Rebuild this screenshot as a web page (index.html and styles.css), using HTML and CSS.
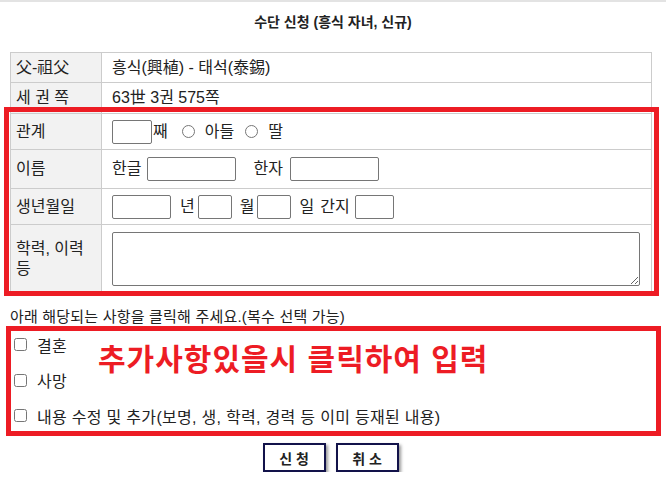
FILE: index.html
```html
<!DOCTYPE html>
<html lang="ko">
  <head>
    <meta charset="UTF-8" />
    <meta name="viewport" content="width=device-width, initial-scale=1.0" />
    <title>수단 신청</title>
    <link rel="stylesheet" href="styles.css">
  </head>
  <body>
    <div class="page">
      <h1 class="title">수단 신청 (흥식 자녀, 신규)</h1>

      <div class="form-wrap">
        <table class="info">
          <tr class="r30">
            <th>父-祖父</th>
            <td>흥식(興植) - 태석(泰錫)</td>
          </tr>
          <tr class="r31">
            <th>세 권 쪽</th>
            <td>63世 3권 575쪽</td>
          </tr>
          <tr class="r36">
            <th>관계</th>
            <td>
              <div class="field">
                <input type="text" class="box w40" />
                <span class="gap1">째</span>
                <input type="radio" name="rel" class="radio gap14" />
                <span class="gap10">아들</span>
                <input type="radio" name="rel" class="radio gap11" />
                <span class="gap10">딸</span>
              </div>
            </td>
          </tr>
          <tr class="r39">
            <th>이름</th>
            <td>
              <div class="field">
                <span>한글</span>
                <input type="text" class="box w89 gap6" />
                <span class="gap17">한자</span>
                <input type="text" class="box w89 gap7" />
              </div>
            </td>
          </tr>
          <tr class="r36">
            <th>생년월일</th>
            <td>
              <div class="field">
                <input type="text" class="box w59" />
                <span class="gap9">년</span>
                <input type="text" class="box w34 gap3" />
                <span class="gap8">월</span>
                <input type="text" class="box w34 gap3" />
                <span class="gap8">일</span>
                <span class="gap6">간지</span>
                <input type="text" class="box w39 gap5" />
              </div>
            </td>
          </tr>
          <tr class="r68">
            <th>학력, 이력 등</th>
            <td><textarea class="memo"></textarea></td>
          </tr>
        </table>
        <!-- red marker drawn over the editable rows -->
        <div class="mark"></div>
      </div>

      <p class="note">아래 해당되는 사항을 클릭해 주세요.(복수 선택 가능)</p>

      <div class="extra">
        <label class="check"><input type="checkbox" />결혼</label>
        <label class="check"><input type="checkbox" />사망</label>
        <label class="check"><input type="checkbox" />내용 수정 및 추가(보명, 생, 학력, 경력 등 이미 등재된 내용)</label>
        <span class="extra-hint">추가사항있을시 클릭하여 입력</span>
      </div>

      <div class="actions">
        <button class="btn">신 청</button>
        <button class="btn">취 소</button>
      </div>
    </div>
  </body>
</html>
```

FILE: styles.css
```css
body {
  margin: 0;
  font-family: "Liberation Sans", "Noto Sans CJK KR", sans-serif;
  color: #222;
  background: #fff;
}

.page {
  border-top: 2px solid #e3e3e3;
}

.title {
  margin: 10px 0 0;
  font-size: 14px;
  line-height: 20px;
  font-weight: bold;
  text-align: center;
}

.form-wrap {
  position: relative;
  margin: 20px 14px 0 10px;
}

.info {
  width: 100%;
  border-collapse: collapse;
  font-size: 16px;
  line-height: 20px;
}
.info th,
.info td {
  border: 1px solid #ccc;
  padding: 0 10px;
  text-align: left;
  vertical-align: middle;
}
.info th {
  width: 80px;
  padding: 0 5px;
  background: #f2f2f2;
  font-weight: normal;
}
.r30 { height: 30px; }
.r31 { height: 31px; }
.r36 { height: 36px; }
.r39 { height: 39px; }
.r68 { height: 68px; }

.field {
  display: flex;
  align-items: center;
}
.box {
  height: 24px;
  box-sizing: border-box;
  border: 1px solid #767676;
  border-radius: 2px;
  padding: 0 2px;
  font: inherit;
  background: #fff;
}
.w34 { width: 34px; }
.w39 { width: 39px; }
.w40 { width: 40px; }
.w59 { width: 59px; }
.w89 { width: 89px; }

.radio {
  width: 13px;
  height: 13px;
  margin: 0;
}
.gap1 { margin-left: 1px; }
.gap3 { margin-left: 3px; }
.gap5 { margin-left: 5px; }
.gap6 { margin-left: 6px; }
.gap7 { margin-left: 7px; }
.gap8 { margin-left: 8px; }
.gap9 { margin-left: 9px; }
.gap10 { margin-left: 10px; }
.gap11 { margin-left: 11px; }
.gap14 { margin-left: 14px; }
.gap17 { margin-left: 17px; }

.memo {
  display: block;
  width: 528px;
  height: 54px;
  box-sizing: border-box;
  border: 1px solid #767676;
  border-radius: 2px;
  margin: 0;
}

.mark {
  position: absolute;
  left: -6px;
  top: 55px;
  width: 655px;
  height: 189px;
  box-sizing: border-box;
  border: 5px solid #ed1c24;
  pointer-events: none;
}

.note {
  margin: 15px 0 0 10px;
  font-size: 15px;
  line-height: 18px;
  letter-spacing: 0.2px;
}

.extra {
  position: relative;
  height: 100px;
  margin: 0 5px 0 6px;
  border: 5px solid #ed1c24;
  display: flex;
  flex-direction: column;
  gap: 8.5px;
  font-size: 16px;
  letter-spacing: 0.3px;
}
.check {
  display: flex;
  align-items: center;
  height: 27px;
}
.check input {
  width: 13px;
  height: 13px;
  margin: 0 10px 0 3px;
}
.extra-hint {
  position: absolute;
  left: 87px;
  top: 14px;
  font-size: 30px;
  line-height: 30px;
  font-weight: bold;
  letter-spacing: 1px;
  color: #ed1c24;
}

.actions {
  display: flex;
  justify-content: center;
  gap: 10px;
  margin-top: 7px;
  padding-right: 5px;
}
.btn {
  width: 63px;
  height: 29px;
  background: #fff;
  border: 2px solid #12124a;
  box-shadow: 2px 2px 3px #999;
  font-family: inherit;
  font-size: 14px;
  font-weight: bold;
  color: #222;
}
```
